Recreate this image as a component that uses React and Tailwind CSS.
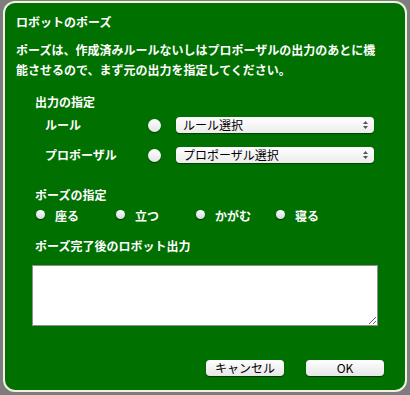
import React from "react";

const font = { fontFamily: '"Noto Sans CJK JP", "Noto Sans", sans-serif' };

function BigRadio() {
  return (
    <span className="block w-[13px] h-[13px] rounded-full bg-gradient-to-b from-[#ffffff] to-[#e4e4e4] shadow-[0_1px_1px_rgba(0,0,0,0.45)]" />
  );
}

function SmallRadio() {
  return (
    <span className="block w-[9px] h-[9px] rounded-full bg-gradient-to-b from-[#ffffff] to-[#d8d8d8] shadow-[0_1px_1px_rgba(0,0,0,0.5)]" />
  );
}

function Select({ label }) {
  return (
    <div className="w-[198px] h-[16px] rounded-[4px] bg-gradient-to-b from-[#ffffff] to-[#ececec] shadow-[0_1px_1px_rgba(0,0,0,0.45)] flex items-center justify-between pl-[7px] pr-[6px]">
      <span className="text-[12px] leading-none text-black font-normal">{label}</span>
      <svg width="5" height="8" viewBox="0 0 5 8">
        <path d="M2.5 0 L5 3 L0 3 Z" fill="#555" />
        <path d="M0 5 L5 5 L2.5 8 Z" fill="#555" />
      </svg>
    </div>
  );
}

function Button({ children }) {
  return (
    <button className="w-[78px] h-[16px] rounded-[4px] bg-gradient-to-b from-[#ffffff] to-[#e6e6e6] shadow-[0_1px_1px_rgba(0,0,0,0.5)] text-[12px] leading-none text-black font-normal flex items-center justify-center">
      {children}
    </button>
  );
}

export default function App() {
  const poses = ["座る", "立つ", "かがむ", "寝る"];

  return (
    <div className="w-[410px] h-[395px] bg-[#7d7d7d] pt-[1px] pl-[3px]" style={font}>
      <div className="w-[404px] h-[391px] border-2 border-[#f3f1e4] rounded-[12px] bg-[#007000] px-[11px] text-white font-bold text-[12px]">
        {/* タイトル */}
        <div className="mt-[9px] h-5 leading-5">ロボットのポーズ</div>

        {/* 説明 */}
        <div className="mt-[8px] leading-5">
          ポーズは、作成済みルールないしはプロポーザルの出力のあとに機
          <br />
          能させるので、まず元の出力を指定してください。
        </div>

        {/* 出力の指定 */}
        <div className="mt-[12px] h-5 leading-5 pl-[19px]">出力の指定</div>
        <div className="mt-[5px] h-[16px] flex items-center pl-[29px]">
          <span className="w-[103px]">ルール</span>
          <BigRadio />
          <span className="w-[15px]" />
          <Select label="ルール選択" />
        </div>
        <div className="mt-[14px] h-[16px] flex items-center pl-[29px]">
          <span className="w-[103px]">プロポーザル</span>
          <BigRadio />
          <span className="w-[15px]" />
          <Select label="プロポーザル選択" />
        </div>

        {/* ポーズの指定 */}
        <div className="mt-[22px] h-5 leading-5 pl-[19px]">ポーズの指定</div>
        <div className="mt-[1px] h-5 flex pl-[20px]">
          {poses.map((p) => (
            <div key={p} className="w-[80px] flex items-center">
              <span className="-mt-[4px]">
                <SmallRadio />
              </span>
              <span className="ml-[10px]">{p}</span>
            </div>
          ))}
        </div>

        {/* 出力 */}
        <div className="mt-[10px] h-5 leading-5 pl-[19px]">ポーズ完了後のロボット出力</div>
        <div className="mt-[9px] pl-[16px]">
          <textarea className="block w-[346px] h-[61px] bg-white border border-[#8f8f8f] outline-none" />
        </div>

        {/* ボタン */}
        <div className="mt-[34px] flex gap-[22px] pl-[190px]">
          <Button>キャンセル</Button>
          <Button>OK</Button>
        </div>
      </div>
    </div>
  );
}
